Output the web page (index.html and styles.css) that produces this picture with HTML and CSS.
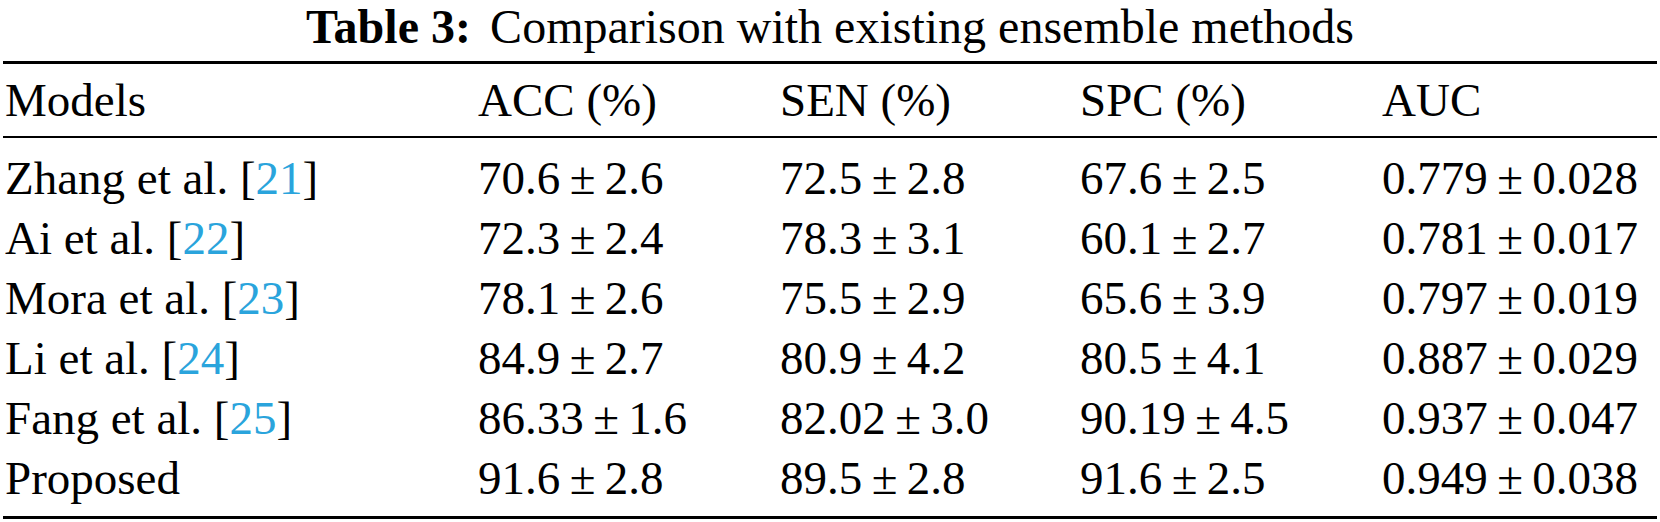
FILE: index.html
```html
<!DOCTYPE html>
<html lang="en">
<head>
<meta charset="utf-8">
<title>Table 3</title>
<link rel="stylesheet" href="styles.css">
</head>
<body>
<h1 class="caption"><span class="label">Table 3:</span><span class="caption-text">Comparison with existing ensemble methods</span></h1>
<table class="results">
  <colgroup>
    <col class="c-model">
    <col class="c-acc">
    <col class="c-sen">
    <col class="c-spc">
    <col class="c-auc">
  </colgroup>
  <thead>
    <tr><th>Models</th><th>ACC (%)</th><th>SEN (%)</th><th>SPC (%)</th><th>AUC</th></tr>
  </thead>
  <tbody>
    <tr><td>Zhang et al. [<span class="cite">21</span>]</td><td>70.6<span class="pm">±</span>2.6</td><td>72.5<span class="pm">±</span>2.8</td><td>67.6<span class="pm">±</span>2.5</td><td>0.779<span class="pm">±</span>0.028</td></tr>
    <tr><td>Ai et al. [<span class="cite">22</span>]</td><td>72.3<span class="pm">±</span>2.4</td><td>78.3<span class="pm">±</span>3.1</td><td>60.1<span class="pm">±</span>2.7</td><td>0.781<span class="pm">±</span>0.017</td></tr>
    <tr><td>Mora et al. [<span class="cite">23</span>]</td><td>78.1<span class="pm">±</span>2.6</td><td>75.5<span class="pm">±</span>2.9</td><td>65.6<span class="pm">±</span>3.9</td><td>0.797<span class="pm">±</span>0.019</td></tr>
    <tr><td>Li et al. [<span class="cite">24</span>]</td><td>84.9<span class="pm">±</span>2.7</td><td>80.9<span class="pm">±</span>4.2</td><td>80.5<span class="pm">±</span>4.1</td><td>0.887<span class="pm">±</span>0.029</td></tr>
    <tr><td>Fang et al. [<span class="cite">25</span>]</td><td>86.33<span class="pm">±</span>1.6</td><td>82.02<span class="pm">±</span>3.0</td><td>90.19<span class="pm">±</span>4.5</td><td>0.937<span class="pm">±</span>0.047</td></tr>
    <tr><td>Proposed</td><td>91.6<span class="pm">±</span>2.8</td><td>89.5<span class="pm">±</span>2.8</td><td>91.6<span class="pm">±</span>2.5</td><td>0.949<span class="pm">±</span>0.038</td></tr>
  </tbody>
</table>
</body>
</html>
```
FILE: styles.css
```css
html, body {
  margin: 0;
  padding: 0;
  background: #ffffff;
}

body {
  color: #000000;
  font-family: "Liberation Serif", "Times New Roman", serif;
  font-size: 47px;
}

.caption {
  margin: 0;
  font-size: 48px;
  font-weight: normal;
  line-height: 54px;
  text-align: center;
}

.caption .label {
  font-weight: bold;
  margin-right: 0.4em;
}

.results {
  margin: 7px 0 0 3px;
  width: 1654px;
  table-layout: fixed;
  border-collapse: separate;
  border-spacing: 0;
  border-top: 3px solid #000;
  border-bottom: 3px solid #000;
}

.c-model { width: 473px; }
.c-acc { width: 302px; }
.c-sen { width: 300px; }
.c-spc { width: 302px; }
.c-auc { width: 277px; }

.results th,
.results td {
  padding: 0 0 0 2px;
  text-align: left;
  font-weight: normal;
  line-height: 60px;
  white-space: nowrap;
}

.results th {
  padding-top: 6px;
  padding-bottom: 6px;
  border-bottom: 2px solid #000;
}

.results tbody tr:first-child td {
  padding-top: 10px;
}

.results tbody tr:last-child td {
  padding-bottom: 8px;
}

.cite {
  color: #2aa4dc;
}

.pm {
  margin: 0 0.2em;
}
```
